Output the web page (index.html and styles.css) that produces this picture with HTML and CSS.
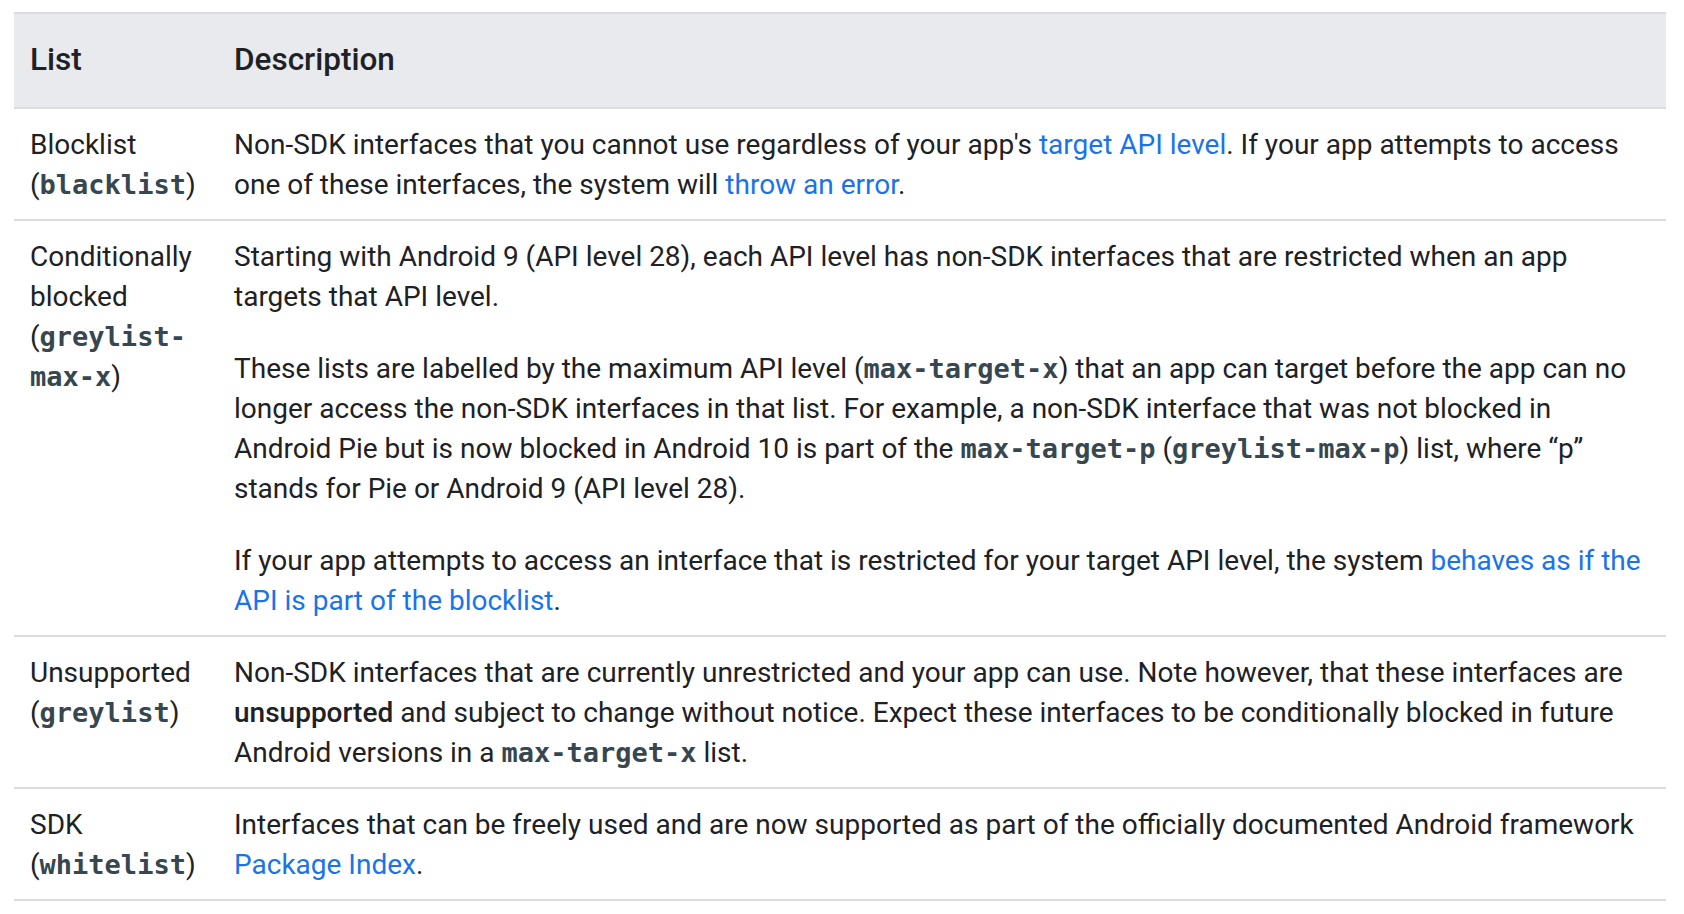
FILE: index.html
```html
<!DOCTYPE html>
<html>
<head>
<meta charset="utf-8">
<link rel="stylesheet" href="styles.css">
</head>
<body>
<div class="wrap">
<table class="lists">
  <colgroup><col class="c1"><col class="c2"></colgroup>
  <thead>
    <tr><th>List</th><th>Description</th></tr>
  </thead>
  <tbody>
    <tr>
      <td>Blocklist (<code>blacklist</code>)</td>
      <td><p>Non-SDK interfaces that you cannot use regardless of your app's <a href="#">target API level</a>. If your app attempts to access one of these interfaces, the system will <a href="#">throw an error</a>.</p></td>
    </tr>
    <tr>
      <td>Conditionally blocked (<code>greylist-max-x</code>)</td>
      <td>
        <p>Starting with Android 9 (API level 28), each API level has non-SDK interfaces that are restricted when an app targets that API level.</p>
        <p>These lists are labelled by the maximum API level (<code>max-target-x</code>) that an app can target before the app can no longer access the non-SDK interfaces in that list. For example, a non-SDK interface that was not blocked in Android Pie but is now blocked in Android 10 is part of the <code>max-target-p</code> (<code>greylist-max-p</code>) list, where “p” stands for Pie or Android 9 (API level 28).</p>
        <p>If your app attempts to access an interface that is restricted for your target API level, the system <a href="#">behaves as if the API is part of the blocklist</a>.</p>
      </td>
    </tr>
    <tr>
      <td>Unsupported (<code>greylist</code>)</td>
      <td><p>Non-SDK interfaces that are currently unrestricted and your app can use. Note however, that these interfaces are <strong>unsupported</strong> and subject to change without notice. Expect these interfaces to be conditionally blocked in future Android versions in a <code>max-target-x</code> list.</p></td>
    </tr>
    <tr>
      <td>SDK (<code>whitelist</code>)</td>
      <td><p>Interfaces that can be freely used and are now supported as part of the officially documented Android framework <a href="#">Package Index</a>.</p></td>
    </tr>
  </tbody>
</table>
</div>
</body>
</html>
```
FILE: styles.css
```css
html, body {
  margin: 0;
  padding: 0;
  background: #ffffff;
}
body {
  font-family: Roboto, "Noto Sans", sans-serif;
  color: #202124;
  font-size: 28px;
  line-height: 40px;
}
.wrap {
  padding: 12px 18px 0 14px;
}
.lists {
  width: 1652px;
  border-collapse: collapse;
  table-layout: fixed;
  border-top: 2px solid #dadce0;
}
.c1 { width: 204px; }
.lists th {
  background: #e8eaed;
  text-align: left;
  font-weight: 500;
  font-size: 31.5px;
  line-height: 40px;
  padding: 26px 16px 27px 16px;
  border-bottom: 2px solid #dadce0;
}
.lists td {
  vertical-align: top;
  padding: 16px 16px 14px 16px;
  border-bottom: 2px solid #dadce0;
}
.lists td p {
  margin: 0 0 32px 0;
}
.lists td p:last-child {
  margin-bottom: 0;
}
code {
  font-family: "DejaVu Sans Mono", "Liberation Mono", monospace;
  font-weight: bold;
  font-size: 27px;
  line-height: 1;
  color: #37474f;
}
a {
  color: #1a73e8;
  text-decoration: none;
}
strong {
  font-weight: 500;
}
```
